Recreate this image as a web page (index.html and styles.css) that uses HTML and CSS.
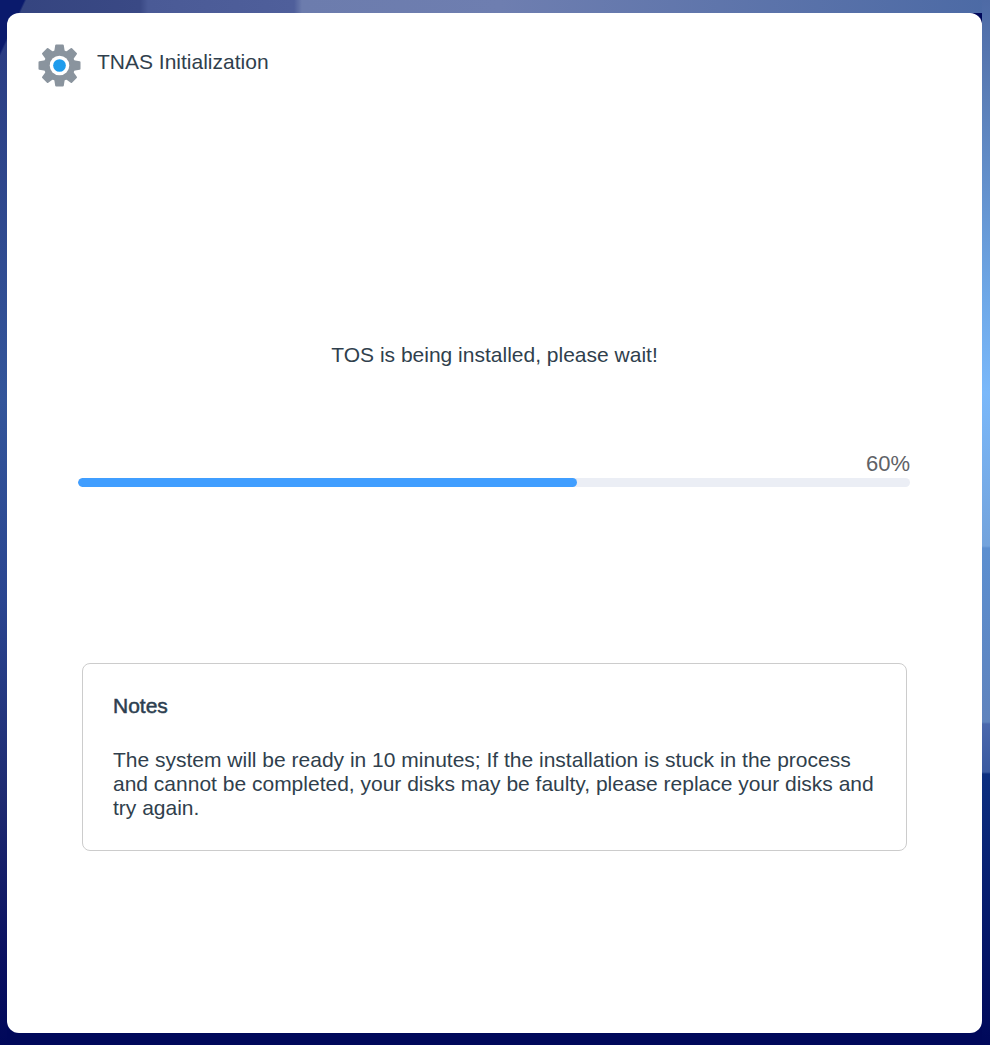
FILE: index.html
```html
<!DOCTYPE html>
<html lang="en">
<head>
    <meta charset="UTF-8">
    <meta name="viewport" content="width=device-width, initial-scale=1.0">
    <title>TNAS Initialization</title>
    <link rel="stylesheet" href="styles.css">
</head>
<body>
    <div class="card">
        <div class="header">
            <svg class="gear" viewBox="0 0 44 44" width="43" height="43">
                <defs>
                    <path id="tooth" d="M18.6 1.5h6.8l1.4 9h-9.6z" stroke="#8a949e" stroke-width="2" stroke-linejoin="round"/>
                </defs>
                <g fill="#8a949e">
                    <circle cx="22" cy="22" r="16"/>
                    <use href="#tooth"/>
                    <use href="#tooth" transform="rotate(45 22 22)"/>
                    <use href="#tooth" transform="rotate(90 22 22)"/>
                    <use href="#tooth" transform="rotate(135 22 22)"/>
                    <use href="#tooth" transform="rotate(180 22 22)"/>
                    <use href="#tooth" transform="rotate(225 22 22)"/>
                    <use href="#tooth" transform="rotate(270 22 22)"/>
                    <use href="#tooth" transform="rotate(315 22 22)"/>
                </g>
                <circle cx="22" cy="22" r="10" fill="#fff"/>
                <circle cx="22" cy="22" r="6.5" fill="#1f9cec"/>
            </svg>
            <span class="title">TNAS Initialization</span>
        </div>

        <p class="status">TOS is being installed, please wait!</p>

        <div class="progress">
            <div class="progress-text">60%</div>
            <div class="progress-track">
                <div class="progress-bar" style="width: 60%"></div>
            </div>
        </div>

        <div class="notes">
            <h4>Notes</h4>
            <p>The system will be ready in 10 minutes; If the installation is stuck in the process and cannot be completed, your disks may be faulty, please replace your disks and try again.</p>
        </div>
    </div>
</body>
</html>
```

FILE: styles.css
```css
html, body {
    height: 100%;
}

body {
    margin: 0;
    padding: 13px 8px 12px 7px;
    box-sizing: border-box;
    overflow: hidden;
    font-family: "Liberation Sans", Arial, sans-serif;
    color: #303f4d;
    background-color: #00085a;
    /* only the strips around the card show, so each edge gets its own layer */
    background-image:
        linear-gradient(to bottom, #4e6aa5 0, #5b7fb8 100px, #6ea8e8 300px, #7ab8fa 393px, #73a3dc 546px, #5c8fd0 548px, #5f83bd 722px, #4a68ad 724px, #3a5aa0 772px, #0c2f80 774px, #00085a 1045px),
        linear-gradient(115deg, #0a1a6c 0, #0a1a6c 22px, rgba(10, 26, 108, 0) 24px),
        linear-gradient(to right, #34447f 0, #3a4985 140px, #4a5a96 148px, #4f5f9b 294px, #6c7cad 302px, #6e7eb0 500px, #4c6aa5 990px),
        linear-gradient(to bottom, #2a3a80 0, #33559a 400px, #2a4590 600px, #1e2a70 800px, #0a1060 960px, #00085a 1045px);
    background-size: 8px 100%, 100% 100%, 100% 13px, 7px 100%;
    background-position: right top, left top, left top, left top;
    background-repeat: no-repeat;
}

.card {
    height: 100%;
    background: #fff;
    border-radius: 12px;
    box-sizing: border-box;
    padding-top: 31px;
}

/* Header */
.header {
    display: flex;
    align-items: flex-start;
    padding-left: 31px;
    height: 44px;
}

.gear {
    flex: none;
}

.title {
    margin-left: 16px;
    font-size: 21px;
    line-height: 36px;
}

/* Status message */
.status {
    margin: 255px 0 0;
    font-size: 21px;
    line-height: 24px;
    text-align: center;
}

/* Progress */
.progress {
    margin: 84px 72px 0 71px;
}

.progress-text {
    margin-bottom: 2px;
    font-size: 22px;
    line-height: 25px;
    color: #606266;
    text-align: right;
}

.progress-track {
    height: 9px;
    background: #ebeef5;
    border-radius: 5px;
    overflow: hidden;
}

.progress-bar {
    height: 100%;
    background: #409eff;
    border-radius: 5px;
}

/* Notes */
.notes {
    margin: 176px 75px 0;
    height: 188px;
    box-sizing: border-box;
    padding: 30px;
    border: 1px solid #ccc;
    border-radius: 8px;
}

.notes h4 {
    margin: 0;
    font-size: 21px;
    line-height: 24px;
    font-weight: normal;
    -webkit-text-stroke: 0.5px #2c3e50;
    color: #2c3e50;
}

.notes p {
    margin: 30px 0 0;
    font-size: 21px;
    line-height: 24px;
}
```
